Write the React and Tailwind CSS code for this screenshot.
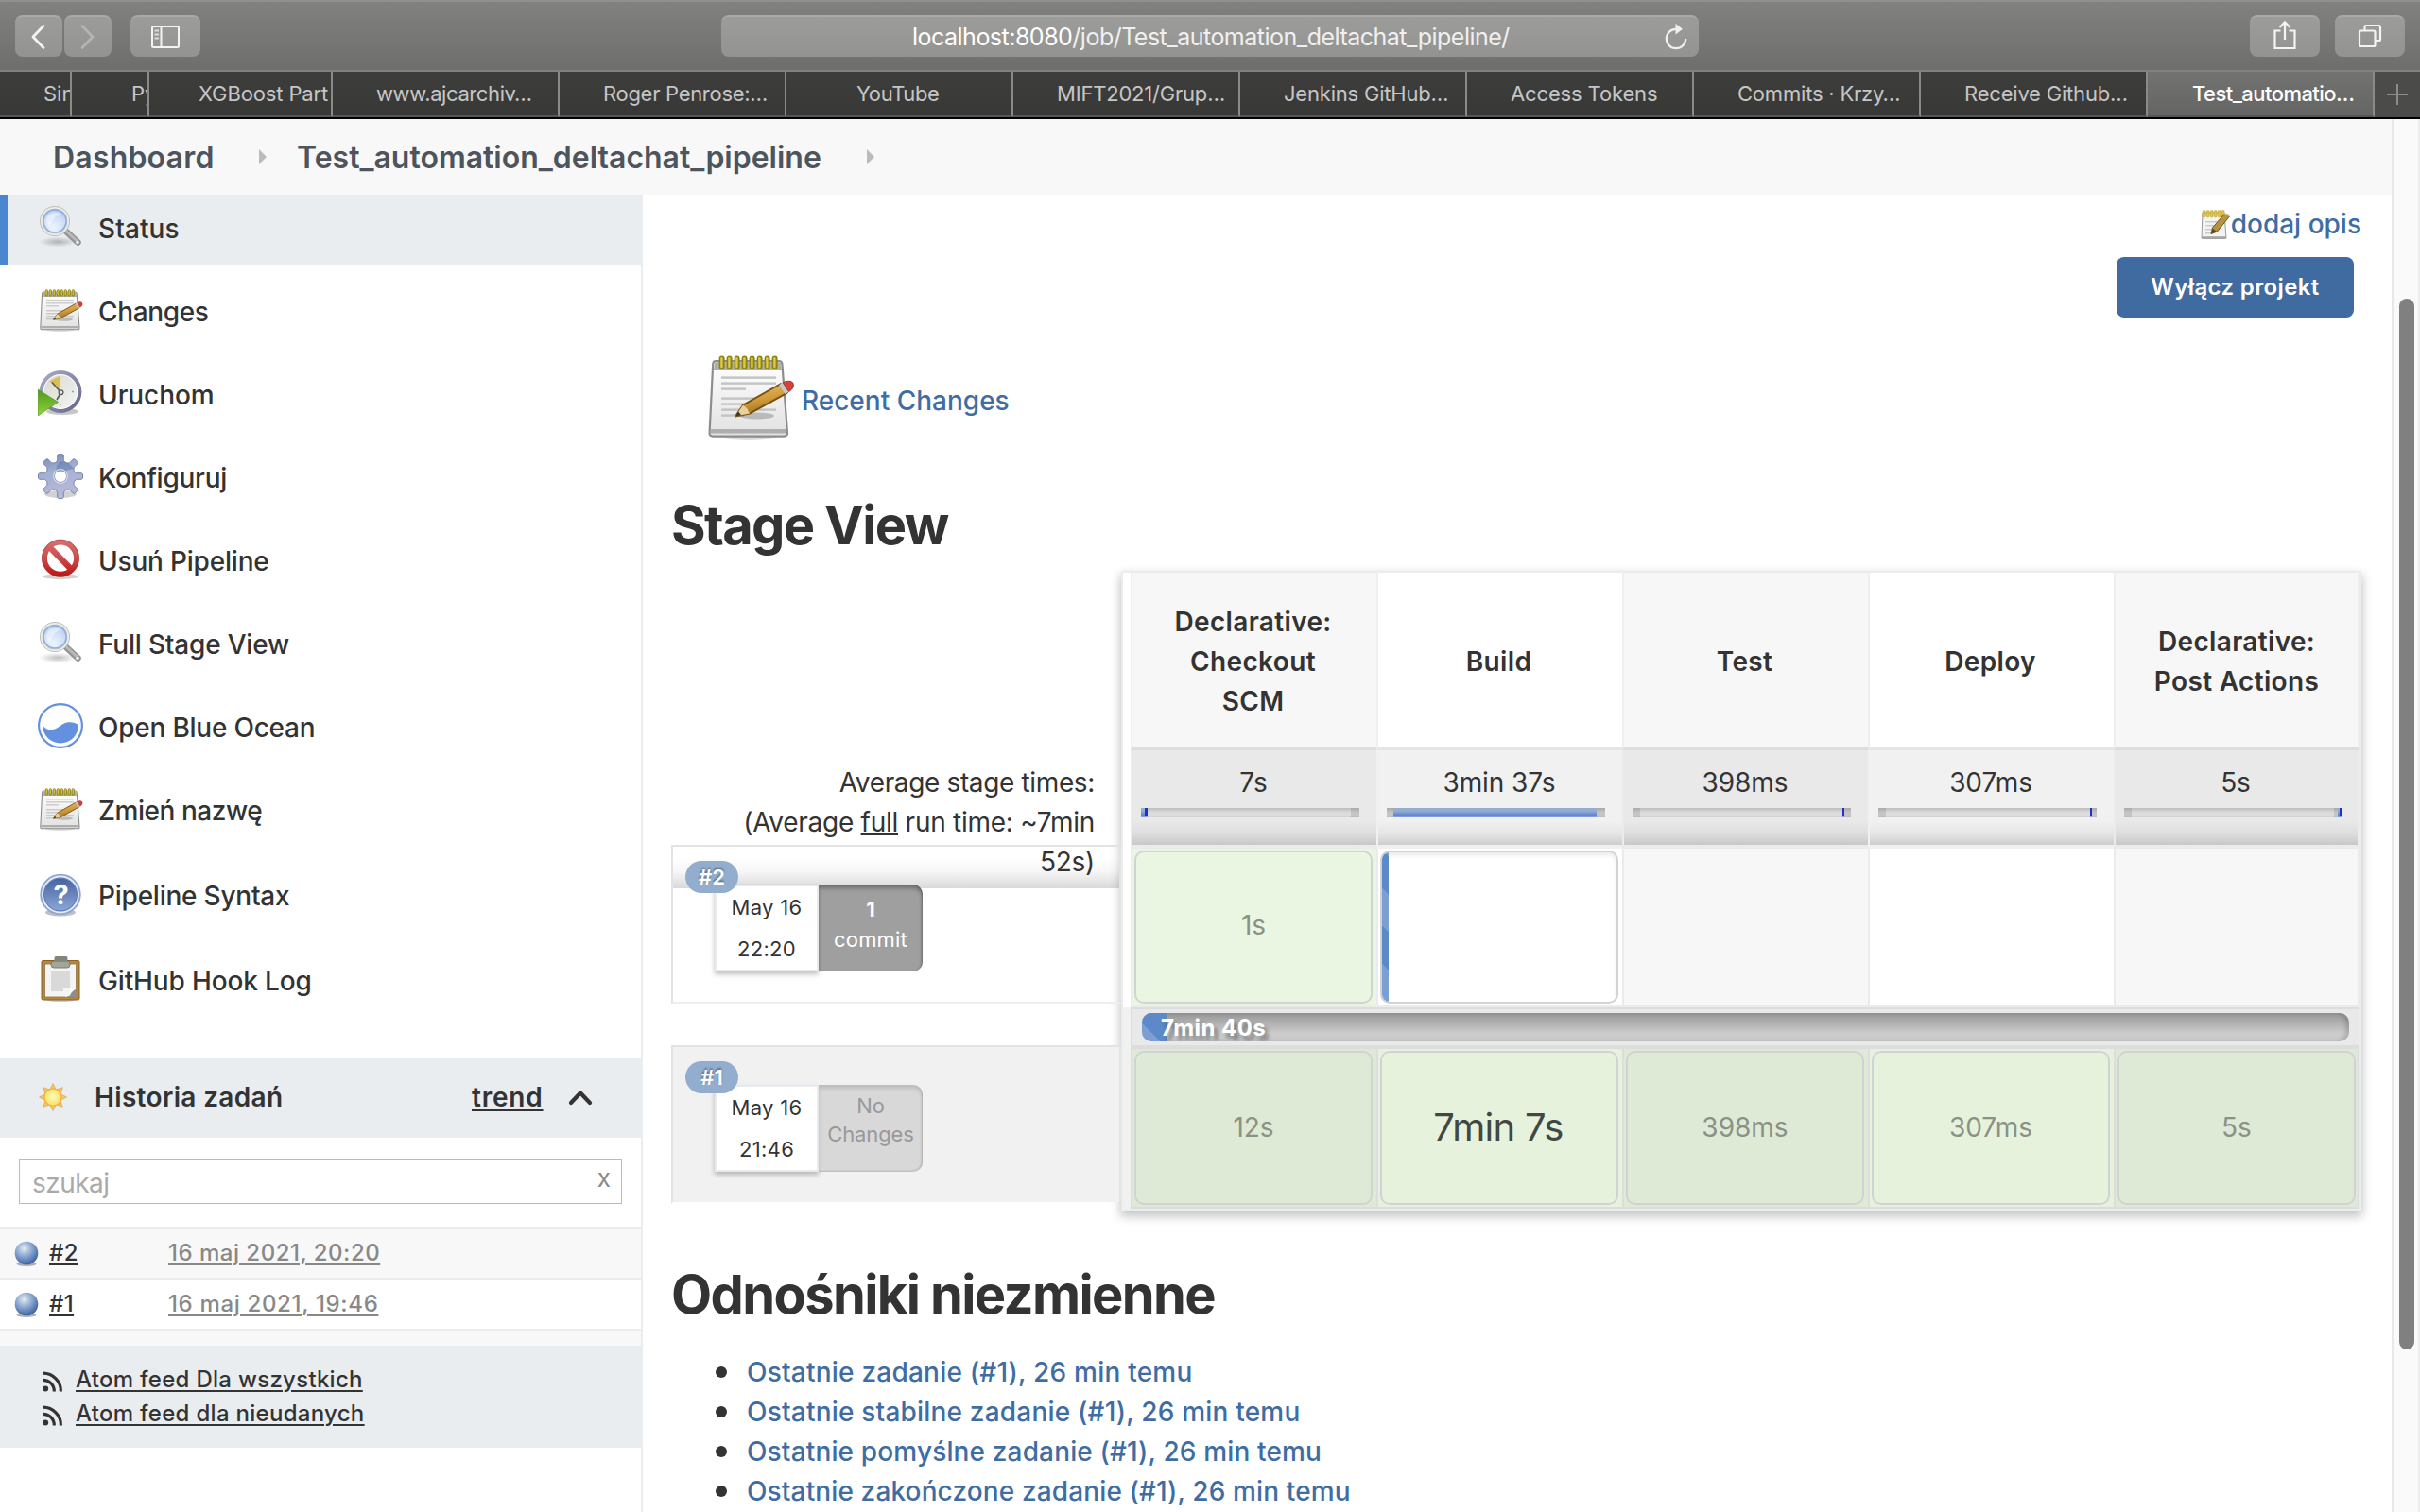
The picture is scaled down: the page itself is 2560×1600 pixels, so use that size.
const INK = "text-[#333333]";

/* ---------- Icons ---------- */

function SearchIcon() {
  return (
    <svg viewBox="0 0 48 48" className="size-12 shrink-0">
      <defs>
        <radialGradient id="lens" cx="0.45" cy="0.75" r="0.8">
          <stop offset="0" stopColor="#eef5fe" />
          <stop offset="0.6" stopColor="#c9dcf6" />
          <stop offset="1" stopColor="#a9c4ea" />
        </radialGradient>
        <radialGradient id="floor">
          <stop offset="0" stopColor="#000" stopOpacity="0.25" />
          <stop offset="1" stopColor="#000" stopOpacity="0" />
        </radialGradient>
      </defs>
      <ellipse cx="21" cy="40" rx="20" ry="5.5" fill="url(#floor)" />
      <path d="M29 28 42.5 40.5" stroke="#949494" strokeWidth="6.5" strokeLinecap="round" />
      <path d="M28.500 27 42 39.5" stroke="#b9b9b9" strokeWidth="3" strokeLinecap="round" />
      <circle cx="42" cy="40.5" r="1.8" fill="#ececec" />
      <circle cx="18" cy="18" r="14.4" fill="url(#lens)" stroke="#bcbcb9" strokeWidth="3.2" />
      <circle cx="18" cy="18" r="14.2" fill="none" stroke="#ededea" strokeWidth="1.800" />
      <circle cx="18" cy="18" r="12" fill="none" stroke="#8facdc" strokeWidth="1.500" />
      <path d="M9 17a9.500 9.500 0 0 1 15-6.500C19 12 15 16 13 24.500A9.500 9.500 0 0 1 9 17Z" fill="#fff" opacity="0.45" />
    </svg>
  );
}

function NotepadIcon({ className }) {
  return (
    <svg viewBox="0 0 48 48" className={className}>
      <defs>
        <linearGradient id="sheet" x1="0" y1="0" x2="0" y2="1">
          <stop offset="0" stopColor="#ffffff" />
          <stop offset="1" stopColor="#e1e1e1" />
        </linearGradient>
        <linearGradient id="wood" x1="0.3" y1="0" x2="0.6" y2="1">
          <stop offset="0" stopColor="#e6c06a" />
          <stop offset="0.5" stopColor="#cf9a3a" />
          <stop offset="1" stopColor="#94661c" />
        </linearGradient>
      </defs>
      <ellipse cx="23.500" cy="44.500" rx="16" ry="2.500" fill="#000" opacity="0.14" />
      <path d="M6 5h33.500q1.500 0 1.700 1.600L44 42.800q.2 2-1.800 2H4.600q-2 0-1.800-2L4.600 6.600Q4.700 5 6 5Z" fill="url(#sheet)" stroke="#8d8d8b" strokeWidth="1.100" />
      <path d="M5.400 5.600h35.200l.4 4.400H5.100Z" fill="#b0b0aa" />
      <path d="M3.600 41h39.800l.1 2.300H3.500Z" fill="#aeaeae" />
      {[8, 12, 16, 20, 24, 28, 32, 36].map((x) => (
        <g key={x}>
          <rect x={x - 0.2} y="2.300" width="3" height="7.200" rx="1.500" fill="#8d8213" />
          <rect x={x + 0.600} y="3" width="1.200" height="5.600" rx="0.600" fill="#ddca45" />
        </g>
      ))}
      <g fill="#c3c3c3">
        <rect x="9" y="13.200" width="29" height="1.200" />
        <rect x="9" y="16.200" width="29" height="1.200" />
        <rect x="9" y="19.200" width="13" height="1.200" />
        <rect x="9" y="24.200" width="22" height="1.200" />
        <rect x="9" y="27.200" width="20" height="1.200" />
        <rect x="9" y="30.200" width="29" height="1.200" />
        <rect x="9" y="33.200" width="12" height="1.200" />
      </g>
      <ellipse cx="28" cy="34" rx="9" ry="1.800" fill="#000" opacity="0.2" />
      <path d="M16.500 34.300 20.500 28.300 40.500 17 44 21.800 24 32.800Z" fill="url(#wood)" stroke="#76500f" strokeWidth="0.900" strokeLinejoin="round" />
      <path d="M16.500 34.300 20.500 28.300 22.500 30 24 32.800Z" fill="#e6d19a" />
      <path d="M16.500 34.300 18 31.800 19.600 33.600Z" fill="#3a3024" />
      <path d="M39.600 17.500 41.600 16.400 44.800 21.300 42.800 22.500Z" fill="#c9c9c9" />
      <path d="M41.600 16.400Q45.200 14.800 46.800 16.400 48.200 19 44.800 21.300Z" fill="#d8413a" stroke="#8e3a2a" strokeWidth="0.500" />
    </svg>
  );
}

function ClockIcon() {
  return (
    <svg viewBox="0 0 48 48" className="size-12 shrink-0">
      <defs>
        <linearGradient id="rim" x1="0" y1="0" x2="1" y2="1">
          <stop offset="0" stopColor="#a9abc8" />
          <stop offset="1" stopColor="#65678f" />
        </linearGradient>
        <linearGradient id="face" x1="0" y1="0" x2="1" y2="1">
          <stop offset="0" stopColor="#d5d7cf" />
          <stop offset="1" stopColor="#f7f7f4" />
        </linearGradient>
        <linearGradient id="play" x1="0" y1="0" x2="0" y2="1">
          <stop offset="0" stopColor="#4d9a1d" />
          <stop offset="1" stopColor="#94d13c" />
        </linearGradient>
      </defs>
      <ellipse cx="26" cy="43.500" rx="17" ry="3.500" fill="#000" opacity="0.22" />
      <circle cx="24" cy="22.500" r="20.400" fill="url(#face)" stroke="url(#rim)" strokeWidth="4" />
      <circle cx="24" cy="22.500" r="17.800" fill="none" stroke="#fff" strokeWidth="1" />
      <path d="M12 11.500 24 5.500V21Z" fill="#d9c04e" />
      <path d="M15 12.500 24.500 23.500 20 31" fill="none" stroke="#5c5c5c" strokeWidth="1.700" />
      <circle cx="24.500" cy="23.200" r="2.400" fill="#e8e8e8" stroke="#555" strokeWidth="1.200" />
      <circle cx="37" cy="22.500" r="1" fill="#9a9a9a" />
      <circle cx="24" cy="36" r="1" fill="#9a9a9a" />
      <path d="M0 20 21.500 33.500 0 48Z" fill="url(#play)" stroke="#5f9a38" strokeWidth="0.800" />
    </svg>
  );
}

const GEAR = Array.from({ length: 8 }, (_, i) => {
  const pt = (r, deg) => {
    const a = ((i * 45 + deg - 90) * Math.PI) / 180;
    return `${(24 + r * Math.cos(a)).toFixed(2)} ${(24 + r * Math.sin(a)).toFixed(2)}`;
  };
  return `${i ? "L" : "M"}${pt(17, -11)}L${pt(22.6, -8.5)}L${pt(23.6, -5)}L${pt(23.6, 5)}L${pt(22.6, 8.5)}L${pt(17, 11)}L${pt(15.2, 22.5)}`;
}).join("");

function GearIcon() {
  return (
    <svg viewBox="0 0 48 48" className="size-12 shrink-0">
      <defs>
        <linearGradient id="gear" x1="0" y1="0" x2="0.3" y2="1">
          <stop offset="0" stopColor="#6f86b3" />
          <stop offset="0.45" stopColor="#a2b0d2" />
          <stop offset="1" stopColor="#b9b9da" />
        </linearGradient>
      </defs>
      <ellipse cx="24" cy="43" rx="17" ry="4" fill="#000" opacity="0.18" />
      <path d={`${GEAR}ZM24 17.500a6.500 6.500 0 1 0 0 13 6.500 6.500 0 0 0 0-13Z`} fillRule="evenodd" fill="url(#gear)" stroke="#7a86a8" strokeWidth="1" strokeLinejoin="round" />
      <path d="M24 8q9 0 14 8-9 1-10 4a6.500 6.500 0 0 0-8 0Q18 12 24 8Z" fill="#5f78aa" opacity="0.55" />
      <circle cx="24" cy="24" r="7.300" fill="none" stroke="#d8dcec" strokeWidth="1.200" />
    </svg>
  );
}

function ForbiddenIcon() {
  return (
    <svg viewBox="0 0 48 48" className="size-12 shrink-0">
      <defs>
        <linearGradient id="ban" gradientUnits="userSpaceOnUse" x1="24" y1="3" x2="24" y2="43">
          <stop offset="0" stopColor="#d77474" />
          <stop offset="0.5" stopColor="#cb4a4a" />
          <stop offset="1" stopColor="#bb1111" />
        </linearGradient>
      </defs>
      <ellipse cx="24" cy="42" rx="19" ry="3" fill="#000" opacity="0.18" />
      <circle cx="24" cy="22.700" r="16.600" fill="#fff" />
      <path d="M12.500 11 35.500 34.400" stroke="url(#ban)" strokeWidth="6.400" />
      <circle cx="24" cy="22.700" r="16.900" fill="none" stroke="url(#ban)" strokeWidth="5.600" />
      <circle cx="24" cy="22.700" r="19.600" fill="none" stroke="#b23434" strokeWidth="0.700" />
    </svg>
  );
}

function OceanIcon() {
  return (
    <svg viewBox="0 0 48 48" className="size-12 shrink-0">
      <circle cx="24" cy="24" r="22.900" fill="#fff" stroke="#6490e0" strokeWidth="2.200" />
      <path d="M5 23.500C8 27.500 12 29 17 27.800 23 26.300 26 20.500 33 20.300 38 20.200 41.500 22 43 23.500A19 19 0 0 1 5 23.500Z" fill="#6490e0" />
    </svg>
  );
}

function HelpIcon() {
  return (
    <svg viewBox="0 0 48 48" className="size-12 shrink-0">
      <defs>
        <linearGradient id="help" x1="0" y1="0" x2="0" y2="1">
          <stop offset="0" stopColor="#46639f" />
          <stop offset="1" stopColor="#8ba7d8" />
        </linearGradient>
      </defs>
      <ellipse cx="24" cy="43.500" rx="16" ry="4" fill="#000" opacity="0.25" />
      <circle cx="24" cy="24.500" r="20.800" fill="#e4ebf6" stroke="#8ea6d0" strokeWidth="1.800" />
      <circle cx="24" cy="24.500" r="17.400" fill="url(#help)" stroke="#5f7db8" strokeWidth="1.200" />
      <text x="24.500" y="34.500" textAnchor="middle" fill="#fff" className="font-['Inter'] text-[29px] font-bold">?</text>
    </svg>
  );
}

function ClipboardIcon() {
  return (
    <svg viewBox="0 0 48 48" className="size-12 shrink-0">
      <ellipse cx="24" cy="46" rx="15" ry="2" fill="#000" opacity="0.2" />
      <rect x="4" y="4.500" width="40" height="41.500" rx="1.500" fill="#b8873a" stroke="#8a6122" strokeWidth="1" />
      <rect x="7.500" y="8" width="33" height="35" fill="#f4f4f2" stroke="#8e7648" strokeWidth="0.800" />
      <path d="M14 15h20v19h-7v3H14Z" fill="#d9d9d9" />
      <path d="M40.500 34v9H30q6-1 5.500-7Z" fill="#8f8f8a" />
      <path d="M40.500 34 30 43l-1-1q5-1 6-8Z" fill="#fff" />
      <rect x="14" y="5" width="20" height="7" rx="3" fill="#a3a598" stroke="#75776b" strokeWidth="0.900" />
      <path d="M19 0h11q1.500 0 1.500 2v3.500h-14V2q0-2 1.500-2Z" fill="#83857a" />
    </svg>
  );
}

function EditNoteIcon() {
  return (
    <svg viewBox="0 0 32 32" className="mt-0.5 size-8 shrink-0">
      <path d="M2 3h23l2 27H1Z" fill="#f3f3f3" stroke="#9a9a98" strokeWidth="1" />
      <path d="M1.200 28.200h25.600V31H1.200Z" fill="#a5a5a3" />
      {[3, 7, 11, 15, 19, 23].map((x) => (
        <rect key={x} x={x - 0.800} y="0.500" width="2.900" height="7.500" rx="1.400" fill="#e0c545" stroke="#b3952a" strokeWidth="0.500" />
      ))}
      <g fill="#c9c9c9">
        <rect x="5" y="12" width="13" height="1.400" />
        <rect x="5" y="16" width="11" height="1.400" />
        <rect x="5" y="20" width="8" height="1.400" />
        <rect x="5" y="24" width="6" height="1.400" />
      </g>
      <path d="M11 25.500 12.500 19 25 4.500 30.500 7 17.500 23Z" fill="#b8933f" stroke="#6d5420" strokeWidth="1" />
      <path d="M25 4.500 27 3.300 31.500 5.500 30.500 7.500Z" fill="#d8cfa8" />
      <path d="M11 25.500 12.500 19.500 17 23Z" fill="#5c4a28" />
    </svg>
  );
}

const RAYS = Array.from({ length: 8 }, (_, i) => i * 45);

function SunIcon() {
  return (
    <svg viewBox="0 0 32 32" className="size-8 shrink-0">
      <defs>
        <radialGradient id="sun">
          <stop offset="0" stopColor="#fffbd0" />
          <stop offset="1" stopColor="#f8e04c" />
        </radialGradient>
      </defs>
      {RAYS.map((r) => (
        <path key={r} d="M13 7.500 16 1.500 19 7.500Z" transform={`rotate(${r} 16 16)`} fill="#f2c56a" stroke="#e2a64a" strokeWidth="0.700" />
      ))}
      <circle cx="16" cy="16" r="9.200" fill="url(#sun)" stroke="#eeb050" strokeWidth="1.300" />
    </svg>
  );
}

function BallIcon() {
  return (
    <svg viewBox="0 0 28 30" className="h-[30px] w-7 shrink-0">
      <defs>
        <radialGradient id="ball" cx="0.4" cy="0.3" r="0.75">
          <stop offset="0" stopColor="#e6ecea" />
          <stop offset="0.45" stopColor="#8ba9d3" />
          <stop offset="1" stopColor="#36579c" />
        </radialGradient>
      </defs>
      <ellipse cx="14" cy="26.500" rx="10.500" ry="2.500" fill="#000" opacity="0.3" />
      <circle cx="14" cy="15" r="12.300" fill="url(#ball)" />
    </svg>
  );
}

function FeedIcon() {
  return (
    <svg viewBox="0 0 22 22" className="size-[22px] shrink-0" fill="none" stroke="#333" strokeWidth="3.200">
      <circle cx="3.200" cy="18.600" r="3" fill="#333" stroke="none" />
      <path d="M0.500 9.300A11.700 11.700 0 0 1 12.300 21.500" />
      <path d="M0.500 2.200A18.800 18.800 0 0 1 19.400 21.500" />
    </svg>
  );
}

/* ---------- Browser chrome ---------- */

const CHROME_BUTTON =
  "flex h-11 items-center justify-center rounded-lg border-t-2 border-[#a9a9a7] bg-linear-to-b from-[#9c9c9a] to-[#939392]";

function Toolbar() {
  return (
    <div className="flex h-[76px] items-start border-y-2 border-t-[#90908e] border-b-[#828281] bg-linear-to-b from-[#818180] to-[#6e6e6c] pt-3.5 pr-4 pl-4">
      <div className={`${CHROME_BUTTON} w-[50px]`}>
        <svg viewBox="0 0 16 28" className="-ml-0.5 h-7 w-4" fill="none" stroke="#f4f4f4" strokeWidth="2.800" strokeLinecap="round" strokeLinejoin="round">
          <path d="M14 2.500 3 14 14 25.500" />
        </svg>
      </div>
      <div className={`${CHROME_BUTTON} ml-0.5 w-[50px]`}>
        <svg viewBox="0 0 16 28" className="h-7 w-4" fill="none" stroke="#b4b4b4" strokeWidth="2.800" strokeLinecap="round" strokeLinejoin="round">
          <path d="M2 2.500 13 14 2 25.500" />
        </svg>
      </div>
      <div className={`${CHROME_BUTTON} ml-5 w-[74px]`}>
        <svg viewBox="0 0 32 26" className="h-[26px] w-8" fill="none" stroke="#f4f4f4" strokeWidth="2">
          <rect x="2" y="2" width="28" height="22" rx="1.500" />
          <path d="M11.500 2V24" />
          <path d="M4.500 6.500H9M4.500 10.500H9M4.500 14.500H9" stroke="#dcdcdc" />
        </svg>
      </div>
      <div className="ml-[551px] flex h-11 w-[1034px] items-center rounded-lg border-t-2 border-[#a9a9a7] bg-linear-to-b from-[#9c9c9a] to-[#939392] pl-[202px]">
        <span className="mt-0.5 w-[795px] text-[25px] tracking-[-0.51px] whitespace-nowrap text-[#f0f0f0]">
          <span className="text-white">localhost:8080</span>/job/Test_automation_deltachat_pipeline/
        </span>
        <svg viewBox="0 0 26 30" className="-mt-px h-[30px] w-[26px]" fill="none" stroke="#f0f0f0" strokeWidth="2.200">
          <path d="M13 6.800A10.200 10.200 0 1 0 23.200 17" />
          <path d="M12.500 1 20 6.700 12.500 12.500Z" fill="#f0f0f0" stroke="none" />
        </svg>
      </div>
      <div className={`${CHROME_BUTTON} ml-[583px] w-[74px]`}>
        <svg viewBox="0 0 26 32" className="-mt-1 h-8 w-[26px]" fill="none" stroke="#f4f4f4" strokeWidth="2.200">
          <path d="M8.500 11.500H2.500V30H23.500V11.500H17.500" />
          <path d="M13 21V2.500M7.500 8 13 2.300 18.500 8" />
        </svg>
      </div>
      <div className={`${CHROME_BUTTON} ml-4 w-[74px]`}>
        <svg viewBox="0 0 28 28" className="-mt-0.5 size-7" fill="none" stroke="#f4f4f4" strokeWidth="2.200" strokeLinejoin="round">
          <rect x="3" y="8.500" width="16.500" height="16.500" rx="1.500" />
          <path d="M8.500 8.500V4.500Q8.500 3 10 3H23.500Q25 3 25 4.500V17.500Q25 19 23.500 19H20" />
        </svg>
      </div>
    </div>
  );
}

const TABS = [
  { label: "Sin", className: "w-[76px] pl-[46px]" },
  { label: "Py", className: "w-[82px] pl-[63px]" },
  { label: "XGBoost Part", className: "w-[194px] pl-[52px] tracking-[-0.13px]" },
  { label: "www.ajcarchiv…", className: "w-60 pl-[46px] tracking-[-0.4px]" },
  { label: "Roger Penrose:…", className: "w-60 pl-[46px] tracking-[-0.3px]" },
  { label: "YouTube", className: "w-60 pl-[74px] tracking-[-0.4px]" },
  { label: "MIFT2021/Grup…", className: "w-60 pl-[46px] tracking-[-0.2px]" },
  { label: "Jenkins GitHub…", className: "w-60 pl-[46px] tracking-[-0.2px]" },
  { label: "Access Tokens", className: "w-60 pl-[46px] tracking-[-0.14px]" },
  { label: "Commits · Krzy…", className: "w-60 pl-[46px] tracking-[-0.2px]" },
  { label: "Receive Github…", className: "w-60 pl-[46px] tracking-[-0.2px]" },
  { label: "Test_automatio…", className: "w-60 pl-[47px] tracking-[-0.55px] font-medium text-white bg-linear-to-b from-[#727271] to-[#656564]" },
];

function TabBar() {
  return (
    <div className="flex h-[50px] border-b-2 border-black bg-[#4b4b4a]">
      {TABS.map((t) => (
        <div
          key={t.label}
          className={`h-12 shrink-0 overflow-hidden border-r-2 border-b-2 border-r-[#8a8a89] border-b-[#555555] text-[22px] leading-[47px] whitespace-nowrap ${
            t.label.startsWith("Test_") ? "" : "bg-linear-to-b from-[#3d3d3c] to-[#383837] text-[#c6c6c6]"
          } ${t.className}`}
        >
          {t.label}
        </div>
      ))}
      <div className="flex flex-1 items-center justify-center">
        <svg viewBox="0 0 24 24" className="size-6" stroke="#8b8b8b" strokeWidth="2">
          <path d="M12 1V23M1 12H23" />
        </svg>
      </div>
    </div>
  );
}

function Crumbs() {
  const arrow = (
    <svg viewBox="0 0 8 16" className="h-4 w-2 shrink-0">
      <path d="M0 0 8 8 0 16Z" fill="#b9bbbd" />
    </svg>
  );
  return (
    <div className="flex h-20 shrink-0 items-center bg-[#f8f8f8] pl-14 text-[32px] font-semibold text-[#4d545d]">
      <span className="w-[218px] pt-0.5 tracking-[0.2px]">Dashboard</span>
      {arrow}
      <span className="w-[631px] pt-0.5 pl-8">Test_automation_deltachat_pipeline</span>
      <span className="flex pl-1">{arrow}</span>
    </div>
  );
}

/* ---------- Sidebar ---------- */

const NAV = [
  { label: "Status", icon: <SearchIcon />, className: "mb-[14px] border-[#4b87d1] bg-[#e9edf0] -mr-0.5", text: "tracking-[0.09px]" },
  { label: "Changes", icon: <NotepadIcon className="size-12 shrink-0" />, className: "mb-[14px] border-transparent", text: "tracking-[-0.35px]" },
  { label: "Uruchom", icon: <ClockIcon />, className: "mb-[14px] border-transparent", text: "tracking-[-0.1px]" },
  { label: "Konfiguruj", icon: <GearIcon />, className: "mb-[14px] border-transparent", text: "tracking-[-0.25px]" },
  { label: "Usuń Pipeline", icon: <ForbiddenIcon />, className: "mb-[14px] border-transparent", text: "tracking-[-0.2px]" },
  { label: "Full Stage View", icon: <SearchIcon />, className: "mb-[14px] border-transparent", text: "tracking-[-0.2px]" },
  { label: "Open Blue Ocean", icon: <OceanIcon />, className: "mb-[14px] border-transparent", text: "tracking-[-0.23px]" },
  { label: "Zmień nazwę", icon: <NotepadIcon className="size-12 shrink-0" />, className: "mb-4 border-transparent", text: "tracking-[-0.45px]" },
  { label: "Pipeline Syntax", icon: <HelpIcon />, className: "mb-4 border-transparent", text: "tracking-[-0.23px]" },
  { label: "GitHub Hook Log", icon: <ClipboardIcon />, className: "mb-11 border-transparent", text: "tracking-[-0.15px]" },
];

const BUILDS = [
  { id: "#2", date: "16 maj 2021, 20:20", className: "bg-[#f8f8f8]", text: "tracking-[0.5px]" },
  { id: "#1", date: "16 maj 2021, 19:46", className: "bg-white", text: "tracking-[0.66px]" },
];

const LINK = "underline decoration-2 underline-offset-[3px]";

function Sidebar() {
  return (
    <aside className="w-[680px] shrink-0 border-r-2 border-[#e9edf0]">
      <nav>
        {NAV.map((n) => (
          <div key={n.label} className={`flex h-[74px] border-l-8 pt-2.5 pl-8 ${n.className}`}>
            {n.icon}
            <span className={`mt-[5px] ml-4 text-[28px] leading-[42px] font-medium ${n.text}`}>{n.label}</span>
          </div>
        ))}
      </nav>
      <div className="-mr-0.5 flex h-[84px] items-center bg-[#e9edf0] pb-0.5 pl-10 text-[28px] font-semibold">
        <SunIcon />
        <span className="ml-7 w-[399px] tracking-[0.34px]">Historia zadań</span>
        <span className={`w-[102px] tracking-[0.8px] ${LINK}`}>trend</span>
        <svg viewBox="0 0 26 18" className="h-[18px] w-[26px]" fill="none" stroke="#333" strokeWidth="4.200" strokeLinecap="round" strokeLinejoin="round">
          <path d="M3 15 13 4.500 23 15" />
        </svg>
      </div>
      <div className="h-[94px] px-5 pt-[22px]">
        <div className="flex h-12 items-center justify-between border border-[#bbbbbb] pr-[11px] pl-[13px]">
          <span className="pt-1 text-[28px] tracking-[-0.55px] text-[#aaaaaa]">szukaj</span>
          <span className="pb-2 text-[26px] text-[#8a8a8a]">x</span>
        </div>
      </div>
      {BUILDS.map((b) => (
        <div key={b.id} className={`flex h-[54px] items-center border-t-2 border-[#e9edf0] pl-3.5 text-[24px] font-medium ${b.className}`}>
          <BallIcon />
          <span className="w-[127px] pl-2.5">
            <span className={`tracking-[0.4px] ${LINK}`}>{b.id}</span>
          </span>
          <span className={`ml-[9px] text-[#888888] ${b.text} ${LINK}`}>{b.date}</span>
        </div>
      ))}
      <div className="h-[18px] border-t-2 border-[#e9edf0] bg-[#f8f8f8]" />
      <div className="-mr-0.5 h-[108px] bg-[#e9edf0] pt-[18px] pl-[45px] text-[24px] leading-9 font-medium tracking-[0.29px]">
        <div className="flex items-center gap-[13px]">
          <span className="pt-1"><FeedIcon /></span>
          <span className={LINK}>Atom feed Dla wszystkich</span>
        </div>
        <div className="flex items-center gap-[13px]">
          <span className="pt-1"><FeedIcon /></span>
          <span className={LINK}>Atom feed dla nieudanych</span>
        </div>
      </div>
    </aside>
  );
}

/* ---------- Stage view ---------- */

const BAR_FILL = "bg-linear-to-b from-[#93add0] from-40% to-[#5f7fd0] border-b-2 border-[#7f9fe0]";
const TICK = "bg-[#1c33c4] border-b-2 border-[#7f9fe0]";
const SHADE = "bg-black/10";

const STAGES = [
  {
    name: ["Declarative:", "Checkout", "SCM"],
    avg: "7s",
    bar: [["w-1", BAR_FILL], ["w-[3px]", TICK], ["w-[215px]", ""], ["w-[9px]", SHADE]],
    second: "1s",
    first: "12s",
  },
  { name: ["Build"], avg: "3min 37s", bar: [["w-[7px]", SHADE], ["w-[215px]", BAR_FILL], ["w-[9px]", SHADE]], first: "7min 7s", large: true },
  { name: ["Test"], avg: "398ms", bar: [["w-2", SHADE], ["w-[214px]", ""], ["w-[2px]", TICK], ["w-[7px]", SHADE]], first: "398ms" },
  { name: ["Deploy"], avg: "307ms", bar: [["w-2", SHADE], ["w-[216px]", ""], ["w-[2px]", TICK], ["w-[5px]", SHADE]], first: "307ms" },
  { name: ["Declarative:", "Post Actions"], avg: "5s", bar: [["w-2", SHADE], ["w-[214px]", ""], ["w-[4px]", SHADE], ["w-[2px]", BAR_FILL], ["w-[3px]", TICK]], first: "5s" },
];

const CELL_BOX = "w-[252px] rounded-[10px] border-2 border-[#cfd3d6] flex items-center justify-center";

function StageTable() {
  return (
    <div className="h-[677px] w-[1312px] border-2 border-[#e9edf0] bg-white shadow-[0_5px_10px_1px_rgba(0,0,0,0.24)]">
      <div className="grid grid-cols-5 pl-2">
        {STAGES.map((s, i) => (
          <div
            key={i}
            className={`flex h-[188px] flex-col items-center justify-center border-b-4 border-l-2 border-l-[#efefef] pt-1 pr-[3px] text-center text-[28px] leading-[42px] font-semibold tracking-[0.34px] last:border-r-2 last:border-r-[#efefef] last:pr-0 ${
              i % 2 ? "border-b-[#e5e5e5] bg-white" : "border-b-[#dddddd] bg-[#f7f7f7]"
            }`}
          >
            {s.name.map((line) => (
              <div key={line}>{line}</div>
            ))}
          </div>
        ))}
      </div>
      <div className="grid grid-cols-5 pl-2">
        {STAGES.map((s, i) => (
          <div
            key={i}
            className={`h-[104px] border-b-4 border-l-2 bg-linear-to-b from-[74%] via-[88%] bg-clip-padding pt-[13px] text-center last:border-r-2 ${
              i % 2 ? "border-[#f0f0f0] from-[#f1f1f1] via-[#e6e6e6] to-[#cdcdcd]" : "border-[#ebebeb] from-[#e9e9e9] via-[#dedede] to-[#c8c8c8]"
            }`}
          >
            <div className="pr-0.5 text-[28px] leading-[42px] tracking-[-0.1px]">{s.avg}</div>
            <div className="mt-1.5 ml-[9px] flex h-2.5 w-[231px] border-b-2 border-[#d3d3d3] bg-linear-to-b from-[#bdbdbd] to-[#dcdcdc] to-60%">
              {s.bar.map(([w, fill], k) => (
                <div key={k} className={`h-2.5 shrink-0 ${w} ${fill}`} />
              ))}
            </div>
          </div>
        ))}
      </div>
      <div className="grid grid-cols-5 pl-2">
        {STAGES.map((s, i) => (
          <div
            key={i}
            className={`h-[168px] border-b-2 border-l-2 border-[#ebebeb] pt-0.5 pl-0.5 last:border-r-2 ${
              i === 0 ? "bg-[#ebf6e2]" : i % 2 ? "bg-white" : "bg-[#f7f7f7]"
            }`}
          >
            {i === 0 && <div className={`${CELL_BOX} h-[162px] pb-1 text-[28px] text-[#8a9186]`}>{s.second}</div>}
            {i === 1 && (
              <div className="h-[162px] w-[252px] overflow-hidden rounded-[10px] border-2 border-[#cfd3d6] shadow-[inset_0_3px_4px_rgba(0,0,0,0.08)]">
                <div className="h-full w-[7px] bg-[repeating-linear-gradient(45deg,#7b9fd3_0_28.3px,#5c89c8_28.3px_56.6px)]" />
              </div>
            )}
          </div>
        ))}
      </div>
      <div className="bg-[#f1f1f1] pl-2">
        <div className="h-11 border-t-2 border-b-4 border-l-2 border-[#dddddd] bg-[#e9e9e9] pt-1 pl-2.5">
          <div className="h-[30px] w-[1277px] overflow-hidden rounded-[10px] bg-linear-to-b from-[#979797] to-[#cbcbcb] to-70% shadow-[inset_-4px_0_4px_rgba(0,0,0,0.15)]">
            <div className="h-full w-[26px] bg-[linear-gradient(45deg,#7b9fd3_0_14px,#5c89c8_14px)] pl-[20px] text-[24px] leading-[32px] font-bold tracking-[0.45px] whitespace-nowrap text-white text-shadow-[4px_5px_4px_rgba(0,0,0,0.4)]">
              7min 40s
            </div>
          </div>
        </div>
        <div className="grid grid-cols-5">
          {STAGES.map((s, i) => (
            <div key={i} className={`h-[169px] border-b-2 border-l-2 border-[#dddddd] pt-0.5 pl-0.5 last:border-r-2 ${i % 2 ? "bg-[#e7f2dd]" : "bg-[#dfead6]"}`}>
              <div className={`${CELL_BOX} h-[163px] pb-0.5 ${s.large ? "pr-0.5 text-[40px] tracking-[-0.7px] text-[#434741]" : "text-[28px] text-[#8a9186]"}`}>{s.first}</div>
            </div>
          ))}
        </div>
      </div>
    </div>
  );
}

const RUNS = [
  { id: "#2", date: "May 16", time: "22:20", className: "border-b-[#eeeeee]" },
  { id: "#1", date: "May 16", time: "21:46", className: "mt-11 border-b-transparent bg-[#f1f1f1] bg-clip-padding" },
];

function RunColumn() {
  return (
    <div className="w-[476px] shrink-0 pt-[190px]">
      <div className="-mb-[46px] h-[146px] bg-[linear-gradient(to_bottom,transparent_78%,#f6f6f6_88%,#d9d9d9)] pt-[13px] pr-7 text-right text-[28px] leading-[42px] tracking-[-0.27px]">
        <span className="tracking-[-0.36px]">Average stage times:</span>
        <br />
        (Average <span className="underline decoration-2 underline-offset-2">full</span> run time: ~7min
        <br />
        52s)
      </div>
      {RUNS.map((r, i) => (
        <div key={r.id} className={`relative flex h-[168px] border-2 border-[#e3e3e3] pt-10 pl-11 ${r.className}`}>
          <div className="h-[92px] w-[110px] border-2 border-[#e7ebef] bg-white text-center text-[22px] leading-[44px] tracking-[0.33px] shadow-[0_3px_5px_rgba(0,0,0,0.25)]">
            <div>{r.date}</div>
            <div>{r.time}</div>
          </div>
          {i === 0 ? (
            <div className="h-[92px] w-[110px] rounded-r-[10px] bg-[#9f9f9f] pt-2.5 text-center text-[22px] leading-8 text-white shadow-[inset_0_4px_4px_rgba(0,0,0,0.3),inset_-1px_0_2px_rgba(0,0,0,0.2)]">
              <div className="font-bold">1</div>
              <div className="tracking-[0.17px]">commit</div>
            </div>
          ) : (
            <div className="h-[92px] w-[110px] rounded-r-[10px] bg-[#d8d8d8] pt-[7px] text-center text-[22px] leading-[30px] tracking-[-0.12px] text-[#999999] shadow-[inset_0_4px_4px_rgba(0,0,0,0.12),inset_-1px_-1px_2px_rgba(0,0,0,0.15)]">
              <div>No</div>
              <div>Changes</div>
            </div>
          )}
          <div className="absolute top-[15px] left-[13px] flex h-[34px] w-14 items-center justify-center rounded-full bg-[#92adce] pt-px text-[22px] font-semibold text-white text-shadow-[0_-2px_2px_rgba(0,0,0,0.35)]">
            {r.id}
          </div>
        </div>
      ))}
    </div>
  );
}

/* ---------- Main column ---------- */

const PERMALINKS = [
  { label: "Ostatnie zadanie (#1), 26 min temu", className: "tracking-[0.22px]" },
  { label: "Ostatnie stabilne zadanie (#1), 26 min temu", className: "tracking-[0.2px]" },
  { label: "Ostatnie pomyślne zadanie (#1), 26 min temu", className: "tracking-[0.15px]" },
  { label: "Ostatnie zakończone zadanie (#1), 26 min temu", className: "tracking-[0.13px]" },
];

function Main() {
  return (
    <main className="flex-1 pt-[9px] pr-8 pl-[30px]">
      <div className="flex items-center justify-end text-[28px] leading-[42px] font-medium text-[#3f6da3]">
        <EditNoteIcon />
        <span className="pt-px pb-px">dodaj opis</span>
      </div>
      <div className="mt-[13px] flex justify-end pr-2">
        <button className="h-16 w-[251px] rounded-lg bg-[#3f6ba0] text-[24px] font-semibold tracking-[0.37px] text-white">Wyłącz projekt</button>
      </div>
      <div className="mt-9 flex h-24 items-center pl-[35px] text-[#3f6da3]">
        <NotepadIcon className="size-24 shrink-0" />
        <span className="mt-2 ml-[7px] text-[28px] font-medium">Recent Changes</span>
      </div>
      <h2 className="mt-14 text-[56px] leading-[65px] font-bold tracking-[-1.65px]">Stage View</h2>
      <div className="mt-[15px] flex">
        <RunColumn />
        <StageTable />
      </div>
      <h2 className="mt-[57px] text-[56px] leading-[65px] font-bold tracking-[-1.6px]">Odnośniki niezmienne</h2>
      <ul className="mt-7 text-[28px] leading-[42px] font-medium text-[#3f6da3]">
        {PERMALINKS.map((p) => (
          <li key={p.label} className="flex items-center pl-[47px]">
            <span className="mr-[21px] size-3 rounded-full bg-[#333333]" />
            <span className={p.className}>{p.label}</span>
          </li>
        ))}
      </ul>
    </main>
  );
}

export default function App() {
  return (
    <div className={`flex h-[1600px] w-[2560px] flex-col overflow-hidden bg-white font-['Inter',sans-serif] ${INK}`}>
      <Toolbar />
      <TabBar />
      <div className="flex h-[1474px]">
        <div className="flex w-[2530px] flex-col">
          <Crumbs />
          <div className="flex h-[1394px] overflow-hidden">
            <Sidebar />
            <Main />
          </div>
        </div>
        <div className="w-[30px] border-r-2 border-l-2 border-r-[#ededed] border-l-[#e8e8e8] bg-[#fafafa] pt-[190px] pl-1.5">
          <div className="h-[1112px] w-4 rounded-full bg-[#808080]" />
        </div>
      </div>
    </div>
  );
}
